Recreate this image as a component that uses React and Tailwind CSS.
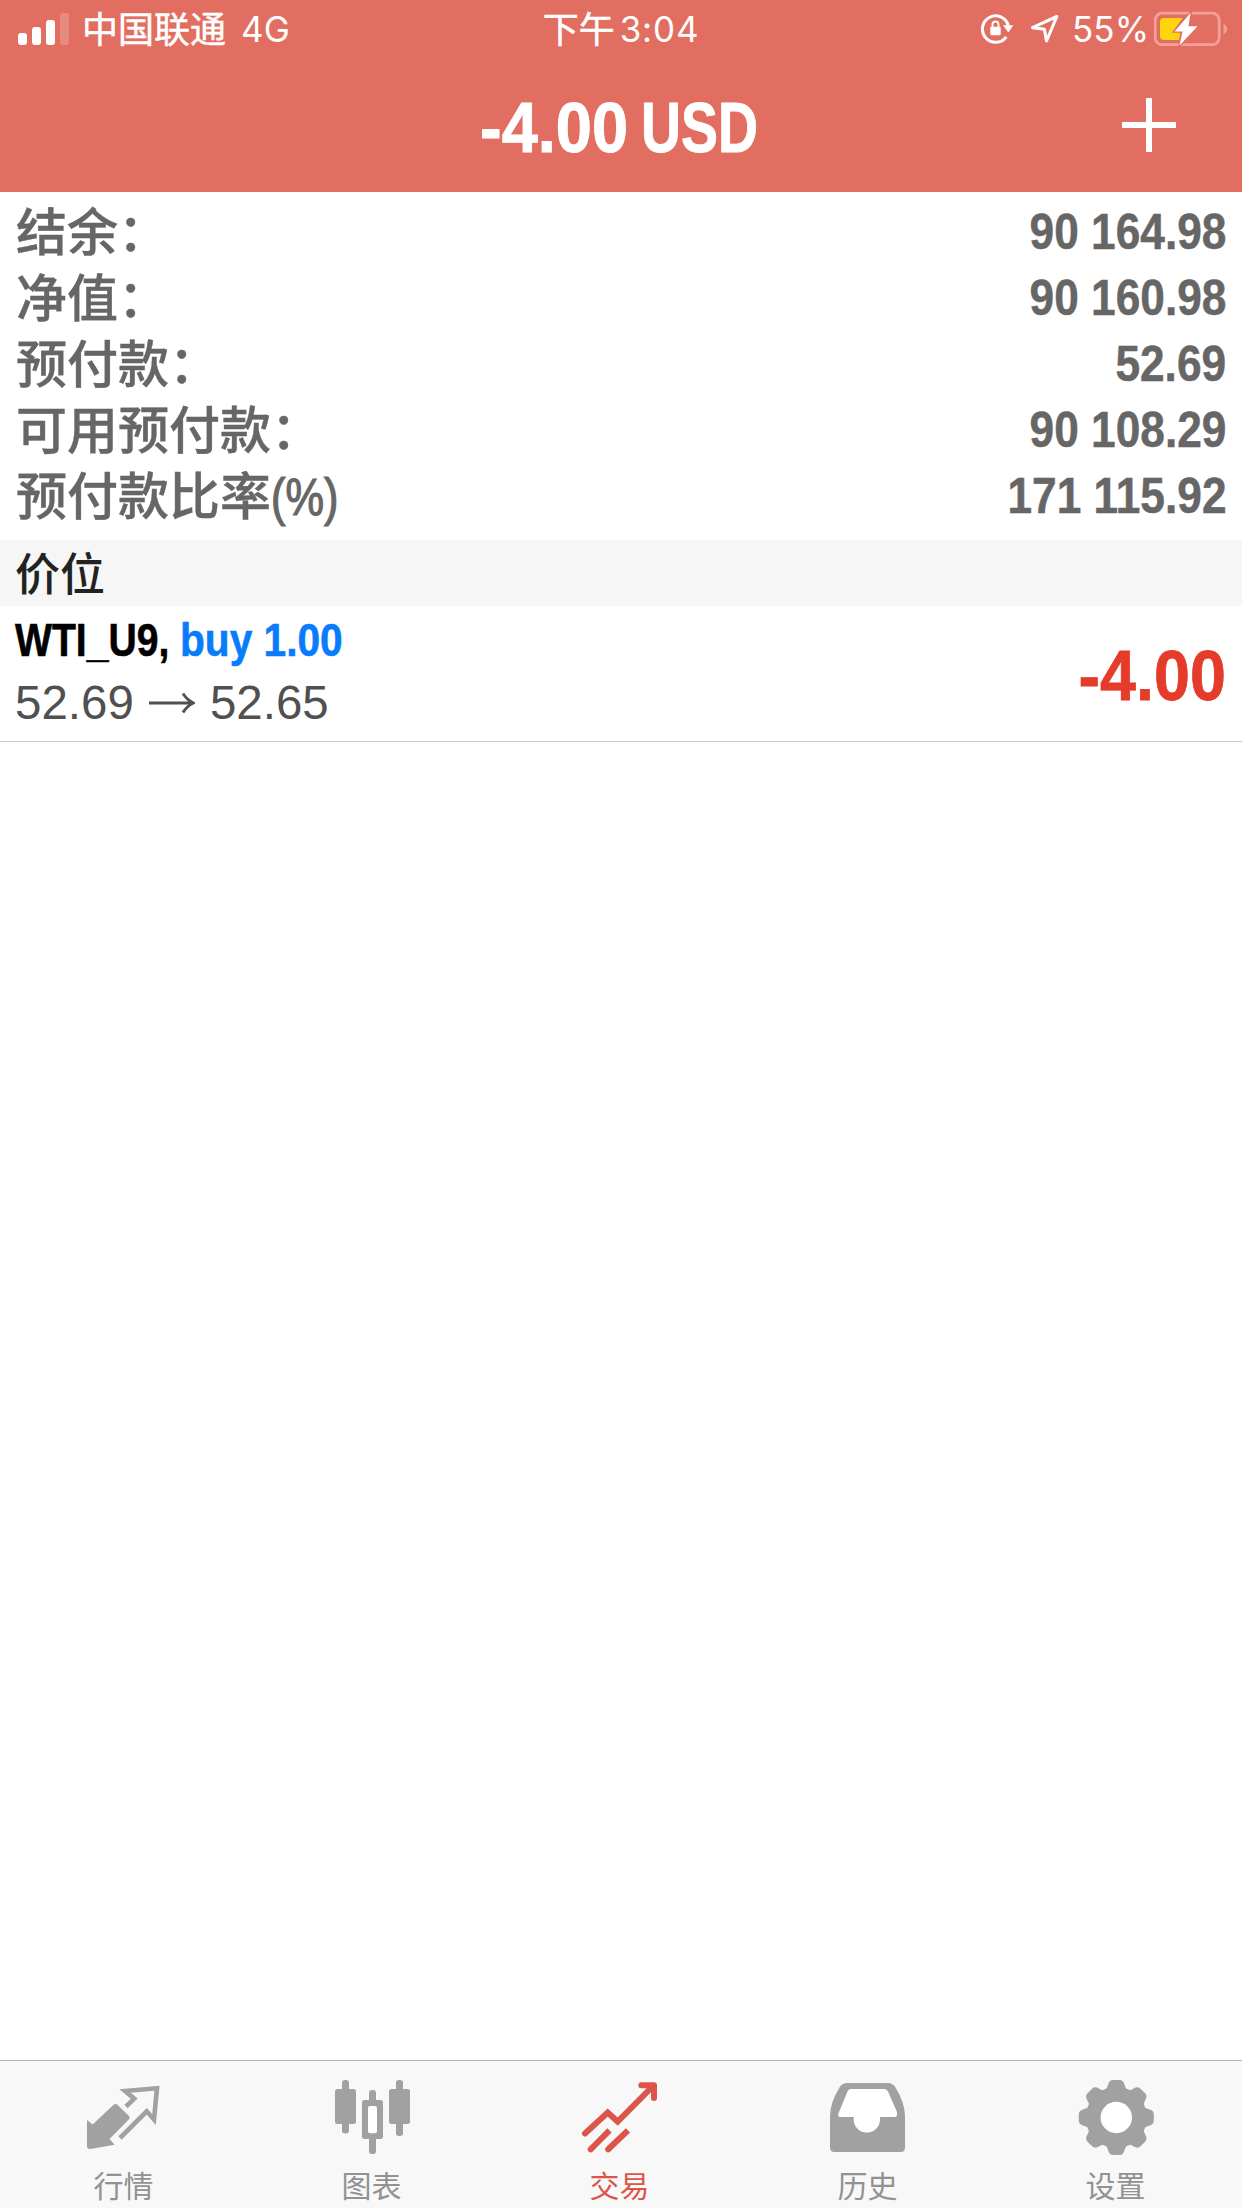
import React from 'react';

const SUMMARY = [
  { label: '结余：',       value: '90 164.98' },
  { label: '净值：',       value: '90 160.98' },
  { label: '预付款：',     value: '52.69' },
  { label: '可用预付款：', value: '90 108.29' },
  { label: '预付款比率',   unit: '(%)', value: '171 115.92' },
];

const TABS = [
  { key: 'quotes',   label: '行情', Icon: QuotesIcon },
  { key: 'charts',   label: '图表', Icon: ChartsIcon },
  { key: 'trade',    label: '交易', Icon: TradeIcon },
  { key: 'history',  label: '历史', Icon: HistoryIcon },
  { key: 'settings', label: '设置', Icon: SettingsIcon },
];

const GEAR_ANGLES = [0, 45, 90, 135, 180, 225, 270, 315];

function QuotesIcon() {
  return (
    <svg viewBox="0 0 80 80" className="w-20 h-20 shrink-0">
      <path
        d="M3 42 L8.7 46.5 L29.3 27 Q31.5 25 33.7 27 L45 38 Q46.5 39.6 45 41.2 L25.5 61 L30.6 66.8 L6.5 71 Q3 71.2 3 68 Z"
        fill="currentColor"
      />
      <path d="M42 28.5 L50.2 20.7 L41 13 L73 10.2 L70 41.5 L62.7 33.3 L36 60" fill="none" stroke="currentColor" strokeWidth="4.6" />
    </svg>
  );
}

function ChartsIcon() {
  return (
    <svg viewBox="0 0 80 80" className="w-20 h-20 shrink-0" fill="currentColor">
      <rect x="10" y="2" width="7" height="53.5" rx="3" />
      <rect x="3" y="11" width="21" height="35" rx="2.5" />
      <rect x="37" y="12" width="7" height="64" rx="3" />
      <rect x="30" y="22" width="21" height="39" rx="2.5" />
      <rect x="36" y="28" width="9" height="27.3" rx="2" fill="#fff" />
      <rect x="64" y="2" width="7" height="56" rx="3" />
      <rect x="57" y="11" width="21" height="35" rx="2.5" />
    </svg>
  );
}

function TradeIcon() {
  return (
    <svg viewBox="0 0 80 80" className="w-20 h-20 shrink-0" fill="none" stroke="currentColor" strokeWidth="6">
      <path d="M5 55.5 L27.7 34.5 L37.7 43.5 L73 8" strokeLinecap="round" />
      <path d="M61.3 7.2 H74 V20" strokeLinecap="round" strokeLinejoin="round" />
      <path d="M29.5 52.3 L11.5 70.5 M48 52.3 L29 70.5" />
      <path d="M11.5 70.5 l-0.8 0.8 M29 70.5 l-0.8 0.8" strokeLinecap="round" />
    </svg>
  );
}

function HistoryIcon() {
  return (
    <svg viewBox="0 0 80 80" className="w-20 h-20 shrink-0">
      <path
        d="M20 5 H60 Q65 5 67.5 9.5 Q77 25 77 38 V69.5 Q77 74 72.5 74 H6.5 Q2 74 2 69.5 V38 Q2 25 11.5 9.5 Q14 5 19 5 Z"
        fill="currentColor"
      />
      <path
        d="M22.5 11 H56.5 Q59 11 60 13.5 L69 34 V37 Q69 39 67 39 H52 V41.5 A13.15 13.15 0 0 1 25.7 41.5 V39 H12 Q10 39 10 36.5 L19.5 13.5 Q20.5 11 22.5 11 Z"
        fill="#fff"
      />
    </svg>
  );
}

function SettingsIcon() {
  return (
    <svg viewBox="0 0 80 80" className="w-20 h-20 shrink-0" fill="currentColor">
      <circle cx="40.3" cy="39.5" r="30.5" />
      {GEAR_ANGLES.map(angle => (
        <path
          key={angle}
          d="M28.8 13 Q31 10.5 32 7 Q33.2 2 37 2 H43.6 Q47.4 2 48.6 7 Q49.6 10.5 51.8 13 Z"
          transform={`rotate(${angle} 40.3 39.5)`}
        />
      ))}
      <circle cx="40.3" cy="39.5" r="15.7" fill="#fff" />
    </svg>
  );
}

function SignalBars() {
  return (
    <div className="flex items-end gap-[5px] h-8">
      <div className="w-[9px] h-3 rounded-[3px] bg-white" />
      <div className="w-[9px] h-[18px] rounded-[3px] bg-white" />
      <div className="w-[9px] h-[25px] rounded-[3px] bg-white" />
      <div className="w-[9px] h-8 rounded-[3px] bg-white/20" />
    </div>
  );
}

function RotationLockIcon() {
  return (
    <svg viewBox="0 0 34 32" className="w-[34px] h-8">
      <path d="M26.3 23.8 A13.2 13.2 0 1 1 28.3 12.5" fill="none" stroke="#fff" strokeWidth="3" />
      <path d="M23 12.3 H33.2 L28.4 19.5 Z" fill="#fff" />
      <rect x="10.3" y="13.8" width="10.4" height="8.4" rx="1" fill="#fff" />
      <path d="M12.5 14.5 V11.5 A3 3 0 0 1 18.5 11.5 V14.5" fill="none" stroke="#fff" strokeWidth="1.9" />
    </svg>
  );
}

function LocationIcon() {
  return (
    <svg viewBox="0 0 30 30" className="w-[30px] h-[30px]">
      <path d="M26.8 2.5 L2.5 13.6 L14.4 15.3 L16.5 27 Z" fill="none" stroke="#fff" strokeWidth="3.1" strokeLinejoin="round" />
    </svg>
  );
}

function BatteryIcon() {
  return (
    <svg viewBox="0 0 74 36" className="w-[74px] h-9">
      <rect x="1.2" y="2.2" width="64" height="31.5" rx="7" fill="none" stroke="#f3a099" strokeWidth="2.8" />
      <path d="M69.5 13 Q73 14.5 73 18 Q73 21.5 69.5 23 Z" fill="#f3a099" />
      <path d="M10 7 H28.5 L18.5 21 H26.5 L25 29 H10 Q6 29 6 25 V11 Q6 7 10 7 Z" fill="#fdd50d" />
      <path d="M36.5 2 L20.5 20.5 H28.5 L25.5 34.5 L43.5 15.2 H34.5 Z" fill="#fff" stroke="#e26e61" strokeWidth="2.5" paintOrder="stroke" />
    </svg>
  );
}

function ArrowRight() {
  return (
    <svg viewBox="0 0 46 24" className="w-[46px] h-6" fill="none" stroke="currentColor" strokeWidth="2.8">
      <path d="M0 12 H44 M34 2.5 Q38 9 44.5 12 Q38 15 34 21.5" />
    </svg>
  );
}

export default function App() {
  return (
    <div className="flex flex-col w-[1242px] h-[2208px] bg-white overflow-hidden font-['Liberation_Sans','Noto_Sans_CJK_SC',sans-serif]">
      <header className="h-48 shrink-0 bg-[#e26e61] text-white">
        {/* Status bar */}
        <div className="grid grid-cols-3 items-center h-[58px] pl-[18px] pr-[14px] text-[35px] leading-none font-['Inter','Noto_Sans_CJK_SC',sans-serif]">
          <div className="flex items-center whitespace-nowrap">
            <SignalBars />
            <span className="ml-[13px] pt-px text-[36px] [-webkit-text-stroke:0.5px]">中国联通</span>
            <span className="ml-[15px] pt-px">4G</span>
          </div>
          <div className="flex items-center justify-center gap-[5px] pr-[4px] pt-px whitespace-nowrap">
            <span className="text-[36px] [-webkit-text-stroke:0.5px]">下午</span>
            <span className="tracking-[0.8px]">3:04</span>
          </div>
          <div className="flex items-center justify-end whitespace-nowrap">
            <RotationLockIcon />
            <span className="ml-4"><LocationIcon /></span>
            <span className="ml-3 pt-px">55%</span>
            <span className="ml-[5px]"><BatteryIcon /></span>
          </div>
        </div>

        {/* Floating profit and new order button */}
        <div className="grid grid-cols-[1fr_auto_1fr] items-center h-[134px] pr-[66px]">
          <h1 className="col-start-2 flex w-[282px] ml-[65px] pt-[5px] text-[71px] leading-[128px] font-bold whitespace-nowrap [-webkit-text-stroke:1px]">
            <span className="w-[164px] origin-left scale-x-[0.915]">-4.00</span>
            <span className="origin-left scale-x-[0.78]">USD</span>
          </h1>
          <button type="button" className="justify-self-end">
            <svg viewBox="0 0 54 54" className="w-[54px] h-[54px]" stroke="#fff" strokeWidth="6">
              <path d="M27 0 V54 M0 27 H54" />
            </svg>
          </button>
        </div>
      </header>

      {/* Account summary */}
      <section className="h-[348px] shrink-0 px-4 pt-[7px] text-[#666]">
        {SUMMARY.map(row => (
          <div key={row.label} className="flex items-center justify-between h-[66px]">
            <span className="flex mt-[4px] text-[51px] leading-[66px] font-medium [-webkit-text-stroke:0.4px]">
              {row.label}
              {row.unit && <span className="origin-left scale-x-[0.85] [-webkit-text-stroke:1.2px]">{row.unit}</span>}
            </span>
            <span className="text-[50px] leading-[66px] font-bold origin-right scale-x-[0.885] [-webkit-text-stroke:0.5px]">{row.value}</span>
          </div>
        ))}
      </section>

      <h2 className="h-[66px] shrink-0 px-[15px] pt-[3px] bg-[#f6f6f6] text-[#222] text-[45px] leading-[66px] font-medium">价位</h2>

      {/* Open position */}
      <section className="flex items-center justify-between h-[136px] shrink-0 pl-[15px] pr-4 border-b border-[#c8c7cc]">
        <div className="pb-[7px]">
          <div className="flex text-[47px] leading-[66px] font-bold text-black whitespace-nowrap [-webkit-text-stroke:0.6px]">
            <span className="w-[165px] origin-left scale-x-[0.833]">WTI_U9,</span>
            <span className="origin-left scale-x-[0.865] text-[#087cfb]">buy 1.00</span>
          </div>
          <div className="flex items-center gap-[15px] text-[47.5px] leading-[60px] text-[#505050]">
            <span>52.69</span>
            <ArrowRight />
            <span>52.65</span>
          </div>
        </div>
        <div className="pt-[4px] text-[71px] leading-[80px] font-bold text-[#e43b2b] origin-right scale-x-[0.91] [-webkit-text-stroke:0.8px]">-4.00</div>
      </section>

      <nav className="flex mt-auto h-[148px] shrink-0 border-t border-[#b2b2b2] bg-[#f8f8f8]">
        {TABS.map(({ key, label, Icon }) => (
          <button
            key={key}
            type="button"
            className={`flex flex-col items-center w-[248px] pt-[17px] ${key === 'trade' ? 'text-[#dd5548]' : 'text-[#a1a1a1]'}`}
          >
            <Icon />
            <span className={`mt-[8px] pr-px text-[30px] leading-[42px] ${key === 'trade' ? 'text-[#dd5548]' : 'text-[#929292]'}`}>{label}</span>
          </button>
        ))}
      </nav>
    </div>
  );
}
